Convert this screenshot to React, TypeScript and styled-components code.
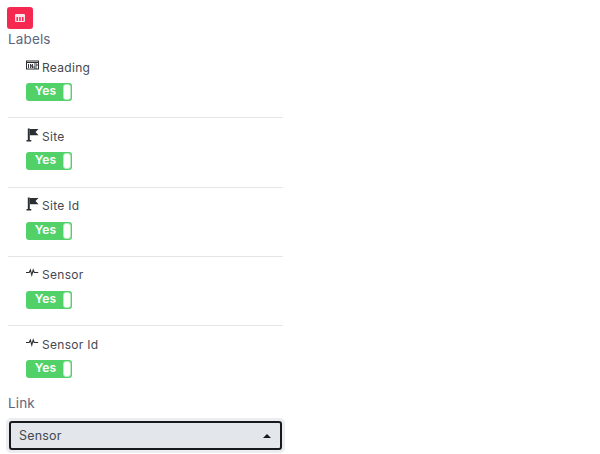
import React from "react";
import styled, { createGlobalStyle } from "styled-components";

const Global = createGlobalStyle`
  html, body { margin: 0; padding: 0; background: #fff; }
  body { font-family: Inter, "Liberation Sans", sans-serif; }
`;

const Page = styled.div`
  width: 600px;
  height: 454px;
  overflow: hidden;
  box-sizing: border-box;
  padding: 7px 0 0 8px;
`;

const ChartButton = styled.button`
  display: flex;
  align-items: center;
  justify-content: center;
  width: 26px;
  height: 22px;
  margin-left: -1px;
  padding: 0;
  border: 0;
  border-radius: 3px;
  background: #f5294f;
`;

const SectionLabel = styled.div`
  font-size: 13.5px;
  line-height: 18px;
  color: #5b6680;
  letter-spacing: 0.15px;
`;

const LabelsTitle = styled(SectionLabel)`
  margin-top: 1px;
`;

const LabelList = styled.div`
  width: 275px;
  margin-top: 1px;
`;

const Row = styled.div`
  box-sizing: border-box;
  height: 69.25px;
  padding: 10px 0 0 18px;
  border-bottom: 1px solid #e4e6ea;
  &:last-child { border-bottom: 0; height: 68px; }
`;

const RowTitle = styled.div`
  display: flex;
  align-items: center;
  gap: 3px;
  height: 16px;
  font-size: 12px;
  letter-spacing: 0.3px;
  color: #44484f;
`;

const IconSlot = styled.span`
  display: inline-flex;
  width: 13px;
  height: 13px;
  margin-top: -4px;
  color: #2b2e33;
`;

const Toggle = styled.div`
  display: flex;
  align-items: center;
  box-sizing: border-box;
  width: 46px;
  height: 18px;
  margin-top: 8px;
  padding-right: 1px;
  border-radius: 3px;
  background: #52d168;
`;

const ToggleText = styled.span`
  flex: 1;
  padding-left: 2px;
  text-align: center;
  font-size: 12px;
  font-weight: 600;
  letter-spacing: 0.2px;
  color: #fff;
  margin-top: -3px;
`;

const Knob = styled.span`
  box-sizing: border-box;
  width: 8px;
  height: 16px;
  border: 1px solid #b5ecbf;
  border-radius: 3px;
  background: #fff;
`;

const SelectHalo = styled.div`
  box-sizing: border-box;
  width: 279px;
  height: 35px;
  margin: 6px 0 0 -2px;
  padding: 3px;
  border-radius: 5px;
  background: #ecedf0;
`;

const SelectBox = styled.div`
  display: flex;
  align-items: center;
  justify-content: space-between;
  box-sizing: border-box;
  height: 29px;
  padding: 0 9px 0 8px;
  border: 2px solid #17191d;
  border-radius: 3px;
  background: #e3e6ea;
  font-size: 12.5px;
  letter-spacing: 0.2px;
  color: #44484f;
`;

const Chart = () => (
  <svg width="10" height="8" viewBox="0 0 10 8">
    <rect width="10" height="8" rx="1" fill="#fde3e8" />
    <rect x="1.5" y="3" width="1.5" height="4" fill="#f5294f" />
    <rect x="4.2" y="3" width="1.5" height="4" fill="#f5294f" />
    <rect x="7" y="3" width="1.5" height="4" fill="#f5294f" />
  </svg>
);

const NumberIcon = () => (
  <svg width="13" height="13" viewBox="0 0 13 13" fill="none" stroke="currentColor">
    <rect x="0.5" y="2" width="12" height="8" strokeWidth="1" />
    <path d="M0.5 3.5h12" strokeWidth="1" />
    <path d="M2.5 5v4M4.5 9V5l2 4V5M8 5h3v2H8v2h3" strokeWidth="0.9" />
  </svg>
);

const FlagIcon = () => (
  <svg width="13" height="14" viewBox="0 0 13 14" fill="currentColor">
    <rect x="1.8" y="0.5" width="2" height="12" />
    <rect x="0.5" y="12" width="4.8" height="1.5" />
    <path d="M4 1h8.5L9.5 4l3 3.2H4z" />
  </svg>
);

const PulseIcon = () => (
  <svg width="13" height="13" viewBox="0 0 13 13" fill="none" stroke="currentColor" strokeWidth="1.1">
    <path d="M0 6.5h3.2l1.2-2.5 1.4 5 1.4-5 1 2.5h4" />
  </svg>
);

const rows = [
  { name: "Reading", icon: <NumberIcon /> },
  { name: "Site", icon: <FlagIcon /> },
  { name: "Site Id", icon: <FlagIcon /> },
  { name: "Sensor", icon: <PulseIcon /> },
  { name: "Sensor Id", icon: <PulseIcon /> },
];

export default function App() {
  return (
    <Page>
      <Global />
      <ChartButton aria-label="Chart">
        <Chart />
      </ChartButton>
      <LabelsTitle>Labels</LabelsTitle>
      <LabelList>
        {rows.map((r) => (
          <Row key={r.name}>
            <RowTitle>
              <IconSlot>{r.icon}</IconSlot>
              {r.name}
            </RowTitle>
            <Toggle>
              <ToggleText>Yes</ToggleText>
              <Knob />
            </Toggle>
          </Row>
        ))}
      </LabelList>
      <SectionLabel>Link</SectionLabel>
      <SelectHalo>
        <SelectBox>
          Sensor
          <svg width="8" height="4" viewBox="0 0 8 4"><path d="M0 4L4 0 8 4z" fill="#17191d" /></svg>
        </SelectBox>
      </SelectHalo>
    </Page>
  );
}
